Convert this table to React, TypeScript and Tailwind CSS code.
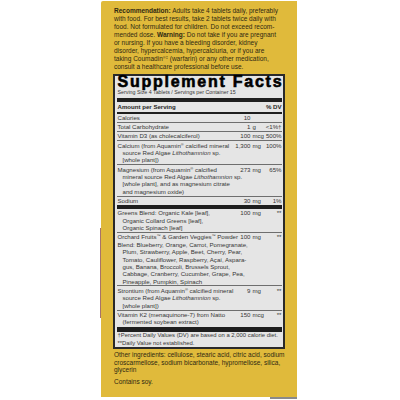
import type { ReactNode } from "react";

const font = "font-['Liberation_Sans',Arial,sans-serif]";

const Reg = () => <span className="relative -top-[2px] text-[4px] leading-none">®</span>;
const Tm = () => <span className="relative -top-[2px] text-[4px] leading-none">™</span>;
const Lith = () => <i>Lithothamnion</i>;

type RowProps = {
	lines: ReactNode[];
	flat?: number;
	n?: ReactNode;
	u?: ReactNode;
	dv?: ReactNode;
	first?: boolean;
};

function Row({ lines, flat = 1, n, u, dv, first }: RowProps) {
	return (
		<div
			className={
				first
					? "flex pb-[0.3px]"
					: "flex border-t border-[#6e6e6e] pt-[0.5px] pb-[0.3px]"
			}
		>
			<div className="min-w-0 flex-1 whitespace-nowrap pl-[1px]">
				{lines.map((l, i) => (
					<div key={i} className={i < flat ? "" : "pl-[5px]"}>
						{l}
					</div>
				))}
			</div>
			<div className="flex w-[34px] whitespace-nowrap">
				<span className="w-[19px] text-right">{n}</span>
				<span className="ml-[2px]">{u}</span>
			</div>
			<div className="w-[16px] whitespace-nowrap text-right">{dv}</div>
		</div>
	);
}

export default function App() {
	return (
		<div className={`flex h-[400px] w-[400px] bg-white ${font}`}>
			{/* sliver of the next panel */}
			<div className="ml-[100px] mt-[228px] h-[90px] w-[1px] bg-[#a7736a]" />

			<div className="flex flex-col">
				<div className="mt-[1px] h-[396px] w-[196px] rounded-tl-[2px] bg-[#e0ba3b] pl-[13px] pt-[6px] text-[#2f2912]">
					{/* Directions */}
					<div className="whitespace-nowrap text-[6.5px] leading-[8px]">
						<div>
							<b>Recommendation:</b> Adults take 4 tablets daily, preferably
						</div>
						<div>with food. For best results, take 2 tablets twice daily with</div>
						<div>food. Not formulated for children. Do not exceed recom-</div>
						<div>
							mended dose. <b>Warning:</b> Do not take if you are pregnant
						</div>
						<div>or nursing. If you have a bleeding disorder, kidney</div>
						<div>disorder, hypercalcemia, hypercalciuria, or if you are</div>
						<div>
							taking Coumadin
							<span className="relative -top-[2px] text-[4px] leading-none">®‡</span> (warfarin) or
							any other medication,
						</div>
						<div>consult a healthcare professional before use.</div>
					</div>

					{/* Facts box */}
					<div className="-ml-[1px] mt-[3px] w-[172px] border-2 border-[#2a2a2a] bg-[#e5e5e5] px-[1.5px] text-[6.1px] leading-[7.4px] text-[#363636]">
						<div className="whitespace-nowrap pl-[1px] text-[16px] font-black leading-[12px] tracking-[1.75px] text-black [-webkit-text-stroke:0.6px_black]">
							Supplement Facts
						</div>
						<div className="mt-[1px] whitespace-nowrap pl-[1px] text-[5.3px] leading-[6px]">
							Serving Size 4 Tablets / Servings per Container 15
						</div>
						<div className="mt-[2.7px] h-[4px] bg-[#1e1e1e]" />
						<div className="flex pt-[1.5px] font-bold text-[#1e1e1e]">
							<div className="flex-1 pl-[1px]">Amount per Serving</div>
							<div>% DV</div>
						</div>
						<div className="mt-[1.4px] h-[2px] bg-[#1e1e1e]" />

						<Row first lines={["Calories"]} n="10" />
						<Row lines={["Total Carbohydrate"]} n="1" u="g" dv="<1%†" />
						<Row lines={["Vitamin D3 (as cholecalciferol)"]} n="100" u="mcg" dv="500%" />
						<Row
							lines={[
								<>
									Calcium (from Aquamin<Reg /> calcified mineral
								</>,
								<>
									source Red Algae <Lith /> sp.
								</>,
								"[whole plant])",
							]}
							n="1,300"
							u="mg"
							dv="100%"
						/>
						<Row
							lines={[
								<>
									Magnesium (from Aquamin<Reg /> calcified
								</>,
								<>
									mineral source Red Algae <Lith /> sp.
								</>,
								"[whole plant], and as magnesium citrate",
								"and magnesium oxide)",
							]}
							n="273"
							u="mg"
							dv="65%"
						/>
						<Row lines={["Sodium"]} n="30" u="mg" dv="1%" />
						<div className="mt-[0.6px] h-[4px] bg-[#1e1e1e]" />

						<Row
							first
							lines={[
								"Greens Blend: Organic Kale [leaf],",
								"Organic Collard Greens [leaf],",
								"Organic Spinach [leaf]",
							]}
							n="100"
							u="mg"
							dv="**"
						/>
						<Row
							flat={2}
							lines={[
								<>
									Orchard Fruits<Tm /> &amp; Garden Veggies<Tm /> Powder
								</>,
								"Blend: Blueberry, Orange, Carrot, Pomegranate,",
								"Plum, Strawberry, Apple, Beet, Cherry, Pear,",
								"Tomato, Cauliflower, Raspberry, Açaí, Aspara-",
								"gus, Banana, Broccoli, Brussels Sprout,",
								"Cabbage, Cranberry, Cucumber, Grape, Pea,",
								"Pineapple, Pumpkin, Spinach",
							]}
							n="100"
							u="mg"
							dv="**"
						/>
						<Row
							lines={[
								<>
									Strontium (from Aquamin<Reg /> calcified mineral
								</>,
								<>
									source Red Algae <Lith /> sp.
								</>,
								"[whole plant])",
							]}
							n="9"
							u="mg"
							dv="**"
						/>
						<Row
							lines={["Vitamin K2 (menaquinone-7) from Natto", "(fermented soybean extract)"]}
							n="150"
							u="mcg"
							dv="**"
						/>
						<div className="mt-[0.6px] h-[5px] bg-[#1e1e1e]" />
						<div className="whitespace-nowrap pl-[1px] pt-[0.3px] text-[5.9px] leading-[7.5px]">
							<div>†Percent Daily Values (DV) are based on a 2,000 calorie diet.</div>
							<div>**Daily Value not established.</div>
						</div>
					</div>

					{/* Other ingredients */}
					<div className="mt-[2px] whitespace-nowrap text-[6.5px] leading-[7.6px]">
						<div>Other ingredients: cellulose, stearic acid, citric acid, sodium</div>
						<div>croscarmellose, sodium bicarbonate, hypromellose, silica,</div>
						<div>glycerin</div>
						<div className="mt-[4.4px]">Contains soy.</div>
					</div>
				</div>
				<div className="ml-[169px] h-[2px] w-[27px] bg-[#8a8a8a]" />
			</div>
		</div>
	);
}
